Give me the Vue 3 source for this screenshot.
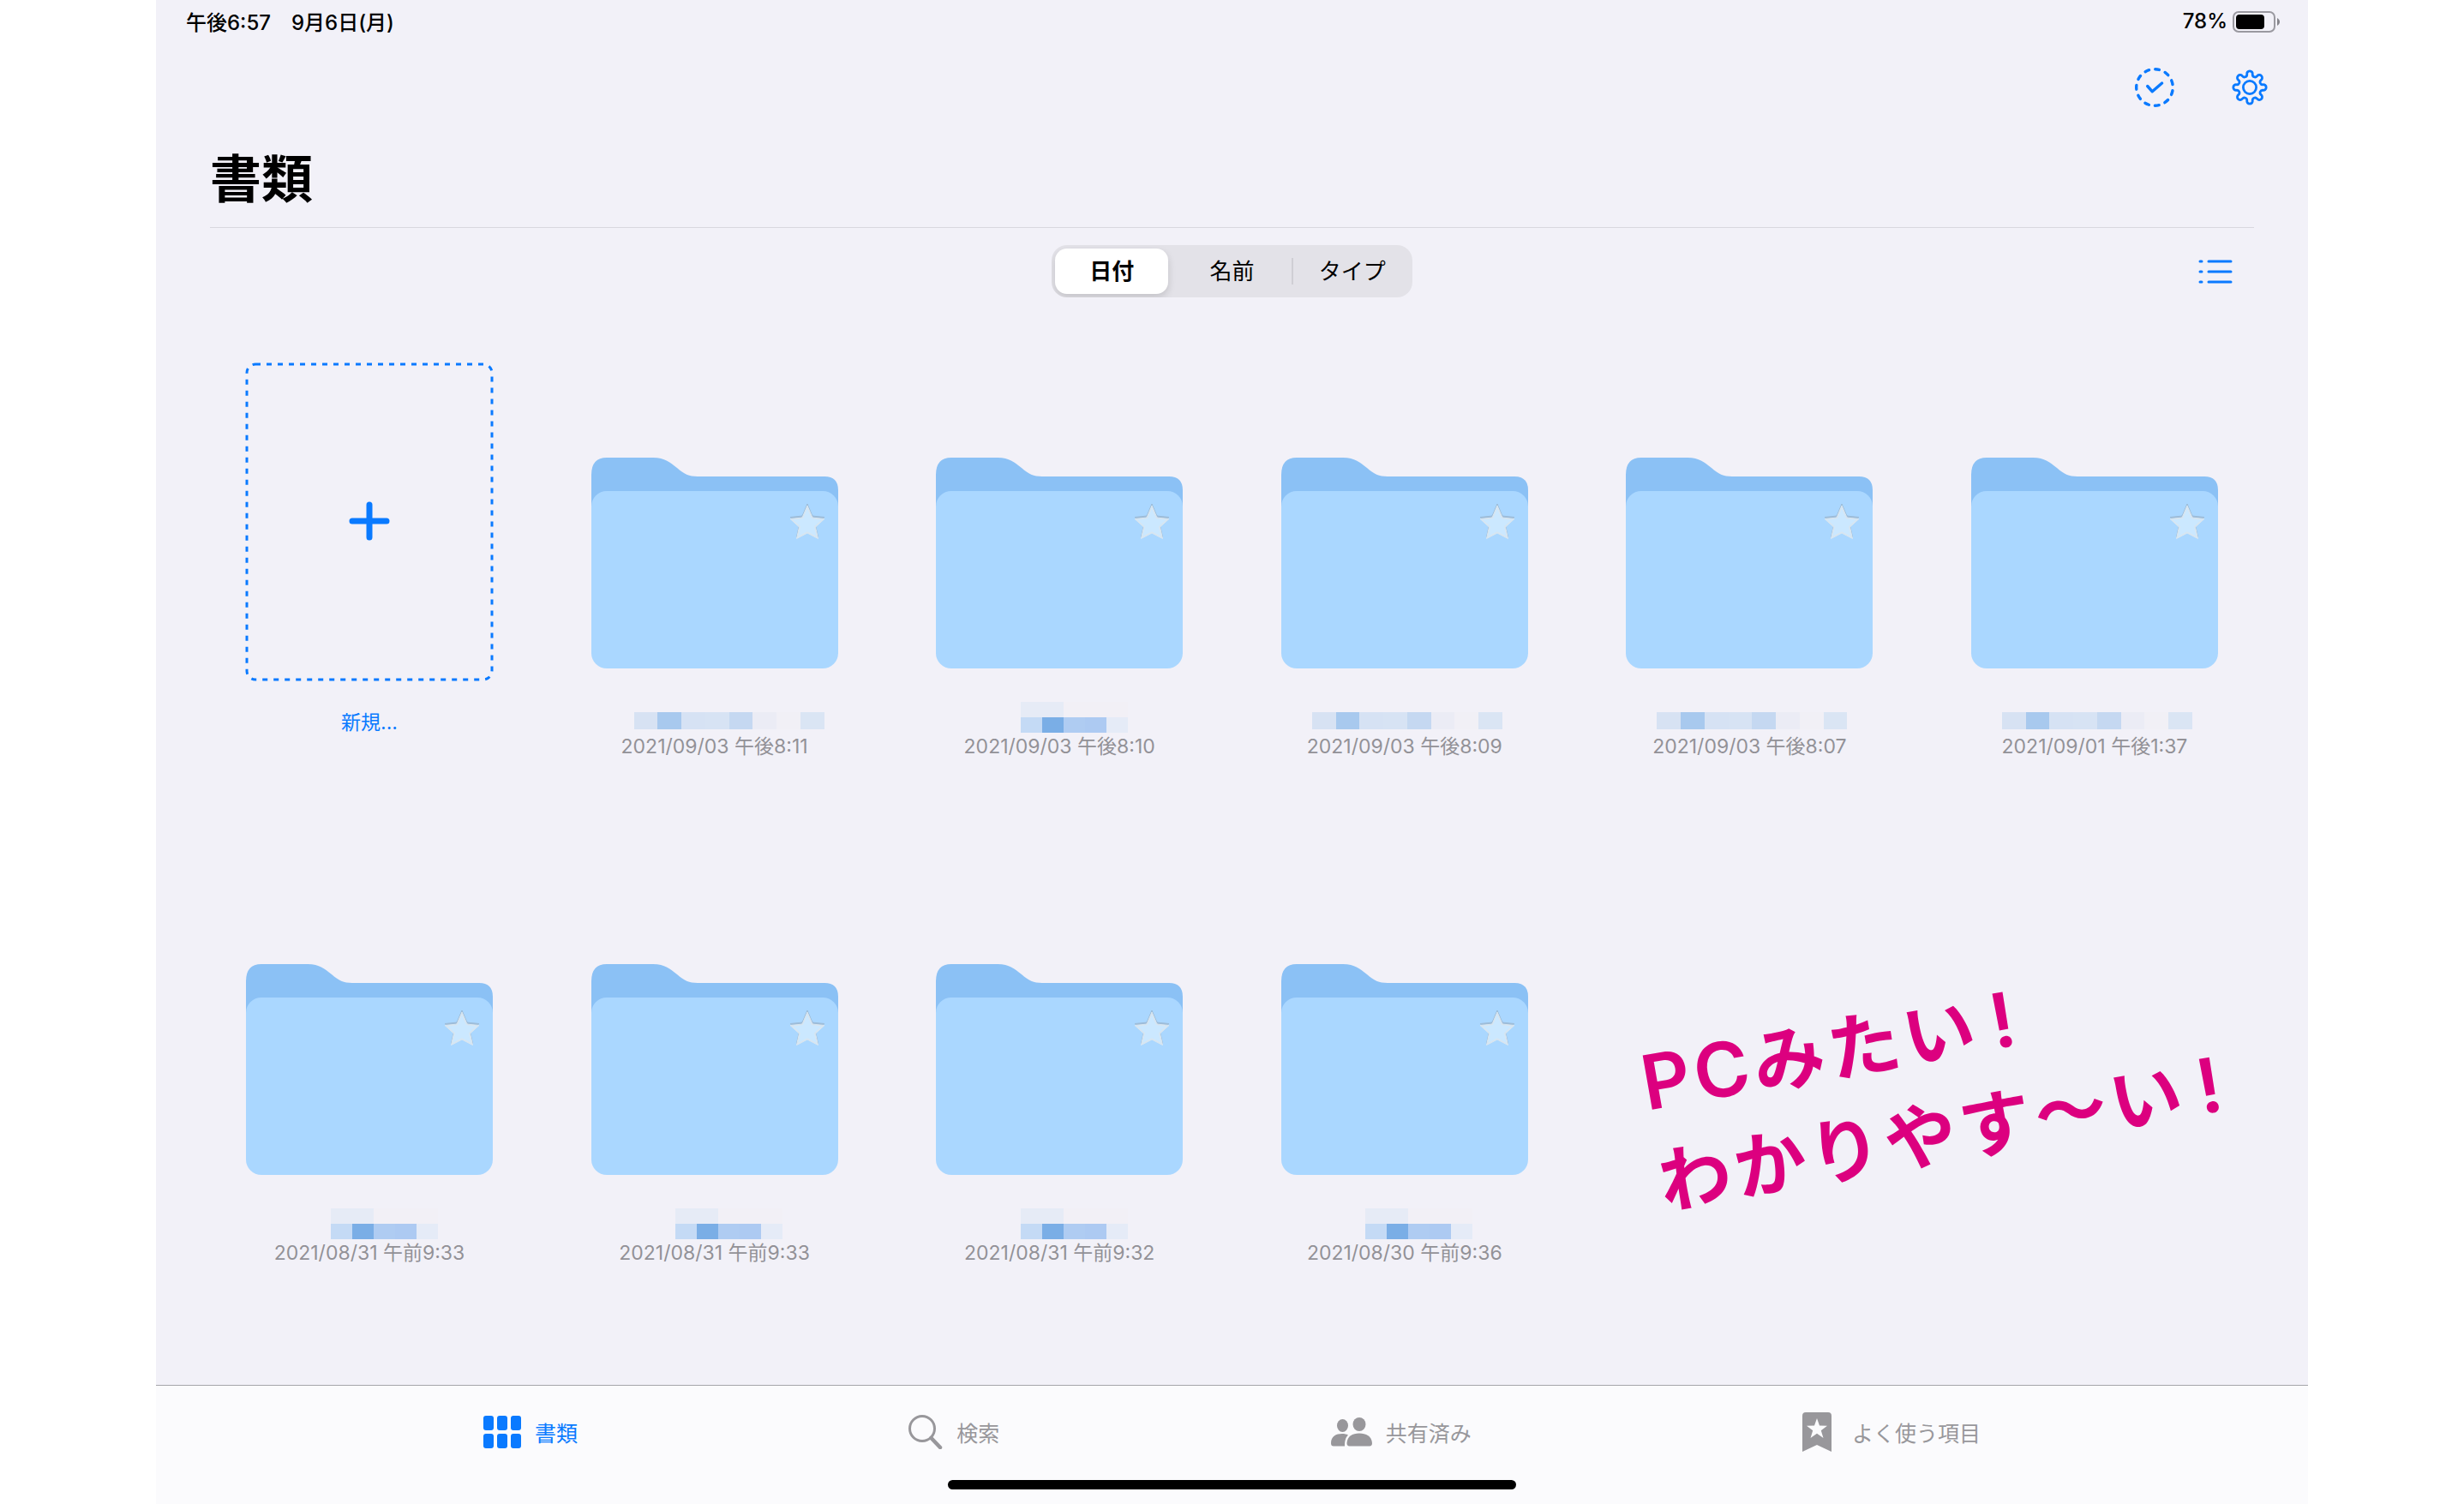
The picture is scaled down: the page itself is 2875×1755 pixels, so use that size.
<template>
  <div class="app">
    <header class="status-bar">
      <div class="status-left">
        <span>午後6:57</span>
        <span>9月6日(月)</span>
      </div>
      <div class="status-right">
        <span>78%</span>
        <svg class="battery" viewBox="0 0 56 26">
          <rect x="1" y="1" width="48" height="23" rx="6" fill="none" stroke="#9a99a0" stroke-width="2" />
          <rect x="4" y="4" width="33" height="17" rx="4" fill="#000" />
          <path d="M52 8c4 2 4 7 0 9z" fill="#86858c" />
        </svg>
      </div>
    </header>

    <div class="actions">
      <button class="icon-button" aria-label="選択">
        <svg viewBox="0 0 48 48">
          <circle
            cx="24"
            cy="24"
            r="21.3"
            pathLength="110"
            stroke-dasharray="4 6"
            transform="rotate(-88 24 24)"
          />
          <path d="M15.7 22.5l5.6 6.3L32.6 19" />
        </svg>
      </button>
      <button class="icon-button" aria-label="設定">
        <svg viewBox="0 0 48 48">
          <path class="thin" :d="gearPath" />
          <circle class="thin" cx="24" cy="24" r="7.6" />
        </svg>
      </button>
    </div>

    <h1>書類</h1>

    <div class="toolbar">
      <div class="segments" role="radiogroup" aria-label="並べ替え">
        <label v-for="s in sorts" :key="s" :class="{ active: s === sort }">
          <input type="radio" name="sort" :value="s" v-model="sort" />
          <span>{{ s }}</span>
        </label>
      </div>
      <button class="list-button" aria-label="リスト表示">
        <svg viewBox="0 0 40 30">
          <path d="M2 3h2M2 15h2M2 27h2M12 3h26M12 15h26M12 27h26" />
        </svg>
      </button>
    </div>

    <main class="documents">
      <button class="card new-card">
        <span class="thumb">
          <svg class="new-box" viewBox="0 0 290 372">
            <rect x="2" y="2" width="286" height="368" rx="10" stroke-width="3" stroke-dasharray="6 7" />
            <path class="plus" d="M145 166v38M125 185h40" stroke-width="7" />
          </svg>
        </span>
        <span class="name">新規...</span>
      </button>

      <button class="card" v-for="f in folders" :key="f.id">
        <span class="thumb">
          <svg class="folder" viewBox="0 0 288 246">
            <path
              d="M0 60V20Q0 0 18 0H72C86 0 92 6 100 12C108 19 114 22 124 22H272Q288 22 288 38V60z"
              fill="#8bc1f5"
            />
            <rect y="39" width="288" height="207" rx="18" fill="#aad7ff" />
            <g transform="translate(0 -2)">
              <path :d="starPath" fill="#9dbcd8" stroke="#9dbcd8" />
              <path :d="starPath" fill="#d8e6f1" stroke="#d8e6f1" transform="translate(0 2)" />
              <path :d="starPath" fill="#cbe8ff" transform="translate(39 14) scale(.845)" />
            </g>
          </svg>
        </span>
        <span class="name" :class="{ shifted: f.shifted }">
          <!-- folder names are masked -->
          <span class="mosaic" :class="f.mask">
            <i v-for="(c, i) in masks[f.mask]" :key="i" :style="{ background: c }"></i>
          </span>
        </span>
        <span class="date">{{ f.date }}</span>
      </button>

      <p class="note">
        <span class="latin">PC</span>みたい<span class="latin mark">!</span><br />
        わかりやす〜い<span class="latin mark">!</span>
      </p>
    </main>

    <nav class="tab-bar">
      <a href="#documents" class="tab current">
        <svg width="44" height="38" viewBox="0 0 44 38">
          <rect
            v-for="n in 6"
            :key="n"
            :x="((n - 1) % 3) * 16"
            :y="n > 3 ? 21 : 0"
            width="12"
            height="17"
            rx="3"
          />
        </svg>
        書類
      </a>
      <a href="#search" class="tab">
        <svg width="40" height="40" viewBox="0 0 40 40">
          <circle cx="16" cy="16" r="14.5" fill="none" stroke="currentColor" stroke-width="3" />
          <path d="M26.5 27L37 38" stroke="currentColor" stroke-width="4.5" stroke-linecap="round" />
        </svg>
        検索
      </a>
      <a href="#shared" class="tab">
        <svg width="48" height="34" viewBox="0 0 48 34">
          <ellipse cx="13.5" cy="9.5" rx="6.5" ry="7.5" />
          <ellipse cx="33" cy="8" rx="7.5" ry="8" />
          <path d="M0 30C0 22 6 19 13 19c3 0 5 .5 7 1.5-3 3-4 7-4 13H3c-2 0-3-1-3-3.5z" />
          <path d="M18.5 30C19 22 25 18.5 33 18.5S47.5 22 48 30c0 2-1 3.5-3 3.5H21.5c-2 0-3-1.5-3-3.5z" />
        </svg>
        共有済み
      </a>
      <a href="#favorites" class="tab">
        <svg width="42" height="46" viewBox="0 0 42 46">
          <path d="M0 46V4q0-4 4-4h26q4 0 4 4v42L17 38z" />
          <path
            d="M17 7l3 8.5 9 .2-7.2 5.5L24.5 30 17 24.8 9.5 30l2.7-8.8L5 15.7l9-.2z"
            fill="#fbfbfd"
          />
        </svg>
        よく使う項目
      </a>
      <div class="home-indicator"></div>
    </nav>
  </div>
</template>

<script setup>
import { ref } from 'vue';

const sorts = ['日付', '名前', 'タイプ'];
const sort = ref('日付');

const folders = ref([
  { id: 1, date: '2021/09/03 午後8:11', mask: 'long', shifted: true },
  { id: 2, date: '2021/09/03 午後8:10', mask: 'short', shifted: true },
  { id: 3, date: '2021/09/03 午後8:09', mask: 'long' },
  { id: 4, date: '2021/09/03 午後8:07', mask: 'long' },
  { id: 5, date: '2021/09/01 午後1:37', mask: 'long' },
  { id: 6, date: '2021/08/31 午前9:33', mask: 'short', shifted: true },
  { id: 7, date: '2021/08/31 午前9:33', mask: 'short', shifted: true },
  { id: 8, date: '2021/08/31 午前9:32', mask: 'short', shifted: true },
  { id: 9, date: '2021/08/30 午前9:36', mask: 'short', shifted: true },
]);

const masks = {
  long: ['#d7e2f3', '#a8c9ee', '#d6e2f4', '#d7e3f4', '#c5d8f1', '#ebecf5', '#f1f0f6', '#dae5f4'],
  short: [
    '#e6ebf6', '#e6ebf6', '#f2f0f6', '#f2f0f6', '#f2f0f6',
    '#c4daf5', '#7aaee6', '#afccf2', '#adcaf2', '#e5ebf7',
  ],
};

const starPath =
  'M252 56L257.5 69Q258 70 259 70.2L272 71.5L262 80.5Q261.5 81 261.7 82L264.5 94.5L252 88L239.5 94.5L242.3 82Q242.5 81 242 80.5L232 71.5L245 70.2Q246 70 246.5 69z';

// eight round teeth joined by round valleys
function makeGear() {
  const point = (deg) => {
    const a = (deg * Math.PI) / 180;
    return (24 + 15.6 * Math.sin(a)).toFixed(2) + ' ' + (24 - 15.6 * Math.cos(a)).toFixed(2);
  };
  let d = 'M' + point(-12);
  for (let a = 0; a < 360; a += 45) {
    d += `A3.3 3.3 0 1 1 ${point(a + 12)}A3 3 0 0 0 ${point(a + 33)}`;
  }
  return d + 'z';
}
const gearPath = makeGear();
</script>

<style>
body {
  background: #fff;
}
</style>

<style scoped>
.app {
  min-height: 100vh;
  margin: 0 182px;
  display: flex;
  flex-direction: column;
  background: #f2f1f8;
  color: #000;
  font-family: Inter, 'Noto Sans CJK JP', sans-serif;
}
button {
  padding: 0;
  border: 0;
  background: none;
  font: inherit;
  color: inherit;
  cursor: pointer;
}
svg {
  display: block;
  flex: none;
}
.status-bar {
  height: 52px;
  padding: 0 32px 0 35px;
  display: flex;
  justify-content: space-between;
  align-items: center;
  font-size: 24px;
  font-weight: 500;
}
.status-bar span {
  padding-bottom: 4px;
}
.status-left {
  display: flex;
  gap: 24px;
}
.status-right {
  display: flex;
  align-items: center;
  gap: 6px;
}
.battery {
  width: 56px;
  height: 26px;
}
.actions {
  height: 100px;
  padding-right: 44px;
  display: flex;
  justify-content: flex-end;
  align-items: center;
  gap: 63px;
}
.icon-button svg {
  width: 48px;
  height: 48px;
  fill: none;
  stroke: #0a7aff;
  stroke-width: 3.4;
  stroke-linecap: round;
  stroke-linejoin: round;
}
.icon-button .thin {
  stroke-width: 2.8;
}
h1 {
  margin: 0 63px;
  padding-top: 2px;
  font-size: 60px;
  font-weight: 700;
  line-height: 111px;
  border-bottom: 1px solid #d8d7de;
}
.toolbar {
  padding: 20px 88px 0;
  display: grid;
  grid-template-columns: 1fr 421px 1fr;
  align-items: center;
}
.segments {
  grid-column: 2;
  height: 61px;
  display: grid;
  grid-template-columns: repeat(3, 1fr);
  border-radius: 18px;
  background: #e3e2e8;
  overflow: hidden;
}
.segments label {
  margin: 4px;
  display: flex;
  align-items: center;
  justify-content: center;
  position: relative;
  border-radius: 14px;
  font-size: 26px;
  cursor: pointer;
}
.segments span {
  padding-bottom: 4px;
}
.segments input {
  position: absolute;
  opacity: 0;
}
.segments .active {
  background: #fff;
  font-weight: 700;
  box-shadow: 0 4px 10px rgba(0, 0, 0, 0.14);
}
.segments label:not(.active) + label::before {
  content: '';
  position: absolute;
  left: -5px;
  top: 11px;
  bottom: 11px;
  width: 2px;
  background: #cfced4;
}
.list-button {
  justify-self: end;
}
.list-button svg {
  width: 40px;
  height: 30px;
  stroke: #0a7aff;
  stroke-width: 3;
  stroke-linecap: round;
}
.documents {
  flex: 1;
  padding: 76px 105px 0;
  display: grid;
  grid-template-columns: repeat(6, 288px);
  justify-content: space-between;
  align-content: start;
  row-gap: 129px;
}
.card {
  height: 462px;
  display: flex;
  flex-direction: column;
  align-items: center;
}
.thumb {
  height: 372px;
  padding-bottom: 15px;
  box-sizing: border-box;
  display: flex;
  align-items: flex-end;
}
.new-card .thumb {
  padding: 0;
}
.new-box {
  width: 290px;
  height: 372px;
  fill: none;
  stroke: #0a7aff;
}
.plus {
  stroke-linecap: round;
}
.folder {
  width: 288px;
  height: 246px;
}
.name {
  height: 62px;
  padding: 0 0 2px 6px;
  box-sizing: border-box;
  display: flex;
  align-items: flex-end;
  font-size: 23px;
  line-height: 28px;
}
.new-card .name {
  padding: 0;
  color: #0a7aff;
}
.shifted {
  padding-left: 34px;
}
.mosaic {
  display: grid;
}
.mosaic.long {
  width: 222px;
  margin-bottom: 4px;
  grid-template-columns: repeat(8, 1fr);
  grid-auto-rows: 20px;
}
.mosaic.short {
  grid-template-columns: repeat(5, 25px);
  grid-auto-rows: 18px;
}
.date {
  font-size: 23px;
  line-height: 28px;
  color: #929197;
  white-space: nowrap;
}
.note {
  grid-column: 5 / 7;
  margin: 194px 0 0 9px;
  font-size: 84px;
  font-weight: 700;
  line-height: 117px;
  letter-spacing: 5px;
  color: #dc007f;
  white-space: nowrap;
  transform: rotate(-10deg);
  transform-origin: left top;
}
.latin {
  font-size: 88px;
  line-height: 1;
  font-weight: 600;
}
.mark {
  margin-left: 14px;
}
.tab-bar {
  height: 139px;
  padding: 0 382px;
  box-sizing: border-box;
  position: relative;
  display: flex;
  justify-content: space-between;
  border-top: 1px solid #a6a6aa;
  background: #fbfbfd;
}
.tab {
  height: 108px;
  display: flex;
  align-items: center;
  gap: 16px;
  font-size: 25px;
  color: #98979b;
  text-decoration: none;
}
.tab svg {
  fill: currentColor;
}
.tab.current {
  color: #0a7aff;
}
.home-indicator {
  position: absolute;
  left: 50%;
  bottom: 17px;
  width: 663px;
  height: 11px;
  margin-left: -332px;
  border-radius: 6px;
  background: #000;
}
</style>
